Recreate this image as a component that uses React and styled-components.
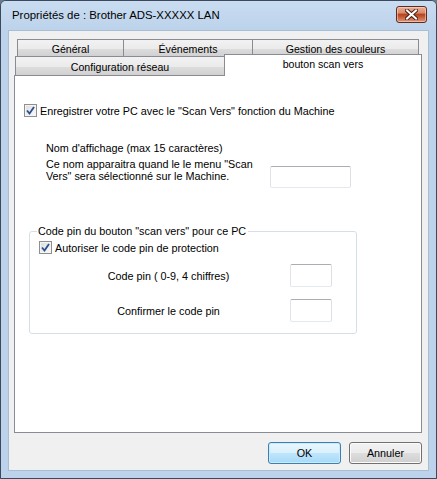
import React from 'react';
import styled, { createGlobalStyle } from 'styled-components';

const GlobalStyle = createGlobalStyle`
  html, body {
    margin: 0;
    padding: 0;
    background: #6b7c8c;
  }
  body {
    font-family: 'Liberation Sans', Arial, sans-serif;
    font-size: 10.8px;
    color: #000;
  }
`;

const Window = styled.div`
  width: 437px;
  height: 479px;
  box-sizing: border-box;
  border: 1px solid #3a4a5c;
  border-radius: 6px 6px 0 0;
  background: #bcd3eb;
  display: flex;
  flex-direction: column;
  overflow: hidden;
`;

const TitleBar = styled.div`
  height: 29px;
  display: flex;
  align-items: center;
  justify-content: space-between;
  padding: 0 9px 0 11px;
  background: linear-gradient(#c9dcf1, #bcd3eb);
`;

const Title = styled.span`
  font-size: 11.4px;
  color: #000;
  padding-bottom: 2px;
`;

const CloseButton = styled.button`
  width: 31px;
  height: 17px;
  margin-bottom: 2px;
  padding: 0;
  border: 1px solid #5e2a22;
  border-radius: 3px;
  background: linear-gradient(
    #e9b096 0%,
    #d98a6b 40%,
    #b44421 48%,
    #c0512c 60%,
    #de9779 100%
  );
  box-shadow: inset 0 0 0 1px rgba(255, 220, 200, 0.55);
  display: flex;
  align-items: center;
  justify-content: center;
`;

const Client = styled.div`
  flex: 1;
  margin: 0 7px 7px 7px;
  background: #f0f0f0;
  border: 1px solid #a9bed4;
  display: flex;
  flex-direction: column;
  padding: 8px 6px 6px 5px;
`;

const TabRow = styled.div`
  display: flex;
  margin: ${(p) => p.$margin};
  height: ${(p) => p.$height}px;
`;

const Tab = styled.div`
  box-sizing: border-box;
  width: ${(p) => p.$width}px;
  height: 100%;
  border: 1px solid #898c95;
  border-bottom: none;
  margin-left: -1px;
  background: linear-gradient(#f2f2f2 0%, #ebebeb 50%, #dddddd 51%, #cfcfcf 100%);
  display: flex;
  align-items: center;
  justify-content: center;
  font-size: 10.6px;
  white-space: nowrap;
  &:first-child {
    margin-left: 0;
  }
`;

const ActiveTab = styled.div`
  position: relative;
  z-index: 1;
  box-sizing: border-box;
  width: ${(p) => p.$width}px;
  height: 22px;
  margin-top: -2px;
  margin-left: -1px;
  border: 1px solid #898c95;
  border-bottom: none;
  background: #fff;
  display: flex;
  align-items: flex-start;
  justify-content: center;
  padding-top: 3px;
  font-size: 10.6px;
  white-space: nowrap;
`;

const Panel = styled.div`
  box-sizing: border-box;
  height: 358px;
  margin-top: -1px;
  border: 1px solid #898c95;
  background: #fff;
  padding: 28px 0 0 9px;
  display: flex;
  flex-direction: column;
`;

const CheckRow = styled.label`
  display: flex;
  align-items: center;
  gap: 3px;
  height: 13px;
`;

const Box = styled.span`
  box-sizing: border-box;
  width: 13px;
  height: 13px;
  border: 1px solid #8e8f8f;
  background: linear-gradient(135deg, #dcdcdc, #fbfbfb);
  box-shadow: inset 0 0 0 1px #f4f4f4;
  display: flex;
  align-items: center;
  justify-content: center;
`;

const NameRow = styled.div`
  display: flex;
  align-items: flex-start;
  margin: 22px 0 0 22px;
`;

const NameText = styled.div`
  width: 224px;
  line-height: 12px;
  padding-top: 3px;
  display: flex;
  flex-direction: column;
  gap: 4px;
`;

const TextField = styled.div`
  box-sizing: border-box;
  width: ${(p) => p.$width}px;
  height: ${(p) => p.$height}px;
  margin-top: ${(p) => p.$top || 0}px;
  border: 1px solid #abadb3;
  border-left-color: #e2e3ea;
  border-right-color: #dbdfe6;
  border-bottom-color: #e3e9ef;
  border-radius: 2px;
  background: #fff;
`;

const Group = styled.fieldset`
  box-sizing: border-box;
  width: 328px;
  height: 109px;
  margin: 37px 0 0 5px;
  padding: 4px 0 0 9px;
  border: 1px solid #d5dfe5;
  border-radius: 3px;
  display: flex;
  flex-direction: column;
`;

const Legend = styled.legend`
  padding: 0 2px 0 1px;
  margin-left: -2px;
`;

const PinRow = styled.div`
  display: flex;
  align-items: center;
  margin-top: ${(p) => p.$top}px;
`;

const PinLabel = styled.span`
  width: 243px;
  margin-left: 8px;
  text-align: center;
`;

const Footer = styled.div`
  display: flex;
  justify-content: flex-end;
  gap: 8px;
  margin-top: 9px;
`;

const Button = styled.button`
  box-sizing: border-box;
  width: 73px;
  height: 22px;
  border-radius: 3px;
  font-family: 'Liberation Sans', Arial, sans-serif;
  font-size: 10.8px;
  color: #000;
  padding: 0;
  border: 1px solid ${(p) => (p.$default ? '#3c7fb1' : '#707070')};
  background: ${(p) =>
    p.$default
      ? 'linear-gradient(#eaf6fd 0%, #d9f0fc 50%, #bee6fd 51%, #a7d9f5 100%)'
      : 'linear-gradient(#f2f2f2 0%, #ebebeb 50%, #dddddd 51%, #cfcfcf 100%)'};
  box-shadow: inset 0 0 0 1px ${(p) => (p.$default ? '#c9ecfc' : '#fbfbfb')};
`;

const CheckMark = () => (
  <svg width="9" height="9" viewBox="0 0 9 9">
    <path d="M1 4.5 L3.5 7.5 L8 1" fill="none" stroke="#2a4f8f" strokeWidth="1.8" />
  </svg>
);

const Checkbox = ({ children }) => (
  <CheckRow>
    <Box>
      <CheckMark />
    </Box>
    {children}
  </CheckRow>
);

const CloseGlyph = () => (
  <svg width="13" height="11" viewBox="0 0 13 11">
    <path d="M2 1.5 L11 9.5 M11 1.5 L2 9.5" stroke="#4a2218" strokeWidth="4" strokeLinecap="square" />
    <path d="M2 1.5 L11 9.5 M11 1.5 L2 9.5" stroke="#ffffff" strokeWidth="2" strokeLinecap="square" />
  </svg>
);

export default function App() {
  return (
    <>
      <GlobalStyle />
      <Window>
        <TitleBar>
          <Title>Propriétés de : Brother ADS-XXXXX LAN</Title>
          <CloseButton aria-label="Fermer">
            <CloseGlyph />
          </CloseButton>
        </TitleBar>
        <Client>
          <TabRow $margin="0 3px 0 3px" $height={18}>
            <Tab $width={107}>Général</Tab>
            <Tab $width={130}>Événements</Tab>
            <Tab $width={167}>Gestion des couleurs</Tab>
          </TabRow>
          <TabRow $margin="-1px 0 0 1px" $height={20}>
            <Tab $width={210}>Configuration réseau</Tab>
            <ActiveTab $width={198}>bouton scan vers</ActiveTab>
          </TabRow>
          <Panel>
            <Checkbox>Enregistrer votre PC avec le "Scan Vers" fonction du Machine</Checkbox>
            <NameRow>
              <NameText>
                <span>Nom d'affichage (max 15 caractères)</span>
                <span>
                  Ce nom apparaitra quand le le menu "Scan
                  <br />
                  Vers" sera sélectionné sur le Machine.
                </span>
              </NameText>
              <TextField $width={81} $height={22} $top={27} />
            </NameRow>
            <Group>
              <Legend>Code pin du bouton "scan vers" pour ce PC</Legend>
              <Checkbox>Autoriser le code pin de protection</Checkbox>
              <PinRow $top={10}>
                <PinLabel>Code pin ( 0-9, 4 chiffres)</PinLabel>
                <TextField $width={42} $height={23} />
              </PinRow>
              <PinRow $top={12}>
                <PinLabel>Confirmer le code pin</PinLabel>
                <TextField $width={42} $height={23} />
              </PinRow>
            </Group>
          </Panel>
          <Footer>
            <Button $default>OK</Button>
            <Button>Annuler</Button>
          </Footer>
        </Client>
      </Window>
    </>
  );
}
